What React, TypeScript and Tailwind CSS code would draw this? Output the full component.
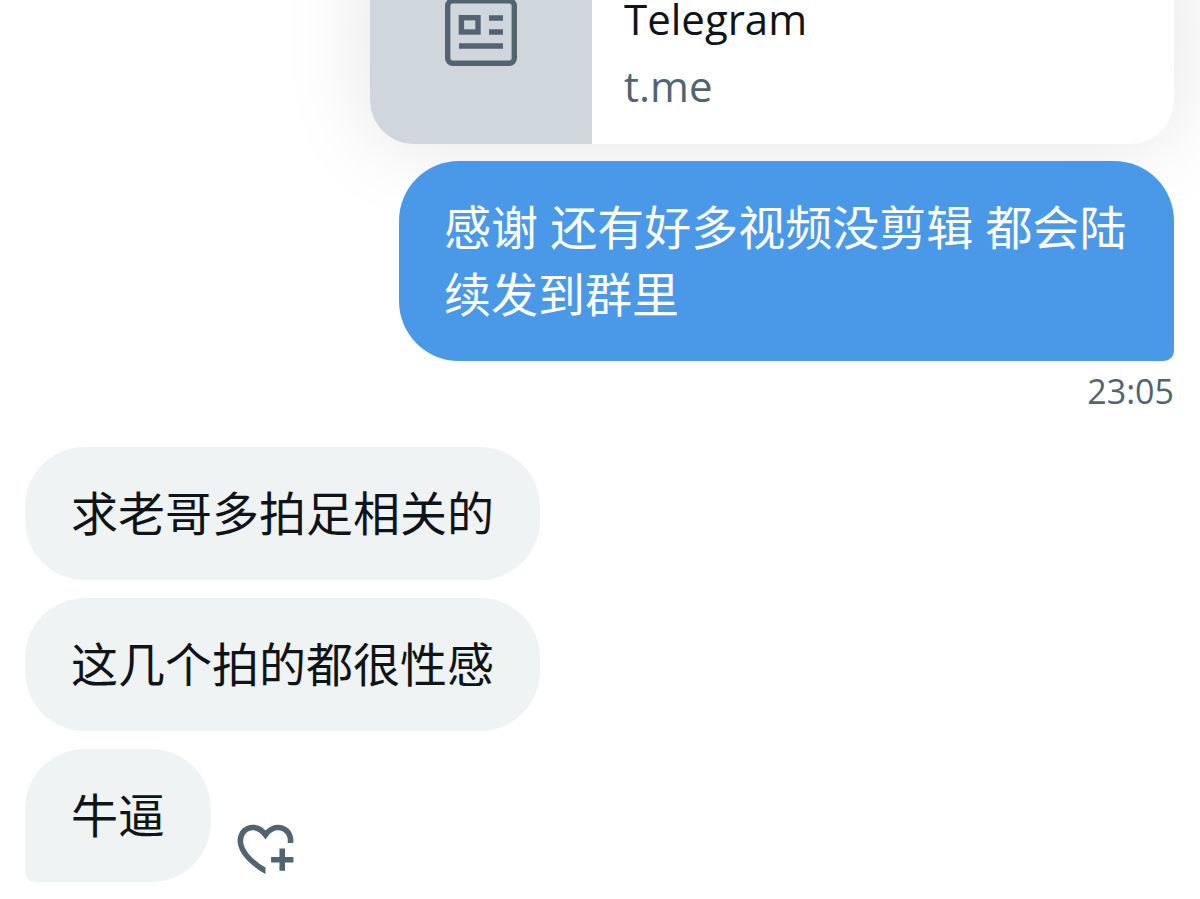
import React from 'react'

const receivedMessages = ['求老哥多拍足相关的', '这几个拍的都很性感']

const NewsIcon = () => (
    <svg width="72" height="68" viewBox="0 0 72 68" fill="none" stroke="#536471" aria-hidden="true">
        <rect x="2.7" y="2.7" width="66.6" height="62.6" rx="5" strokeWidth="5.4" />
        <rect x="16.4" y="19.7" width="16.6" height="14.3" strokeWidth="5.4" />
        <path d="M44 20h14M44 34h14M14 48h44" strokeWidth="5.4" />
    </svg>
)

const HeartPlusIcon = () => (
    <svg width="67" height="67" viewBox="0 0 24 24" fill="#536471" aria-hidden="true">
        <path d="M17 12v3h-2.998v2h3v3h2v-3h3v-2h-3.001v-3H17zm-5 6.839c-3.871-2.34-6.053-4.639-7.127-6.609-1.112-2.04-1.031-3.7-.479-4.82.561-1.13 1.667-1.84 2.91-1.91 1.222-.06 2.68.51 3.892 2.16l.806 1.09.805-1.09c1.211-1.65 2.668-2.22 3.89-2.16 1.242.07 2.347.78 2.908 1.91.334.677.49 1.554.321 2.59h2.011c.153-1.283-.039-2.469-.539-3.48-.887-1.79-2.647-2.91-4.601-3.01-1.65-.09-3.367.56-4.796 2.01-1.43-1.45-3.147-2.1-4.798-2.01-1.954.1-3.714 1.22-4.601 3.01-.896 1.81-.846 4.17.514 6.67 1.353 2.48 4.003 5.12 8.382 7.67l.502.299v-2.32z" />
    </svg>
)

const LinkCard = () => (
    <a
        href="https://t.me"
        className="-mt-[80px] flex h-[224px] w-full max-w-[804px] self-end overflow-hidden rounded-[44px] bg-white shadow-[0_0_90px_rgba(0,0,0,0.11)]"
    >
        <span className="flex w-[222px] shrink-0 items-center justify-center bg-[#cfd6dc]">
            <NewsIcon />
        </span>
        <span className="flex flex-1 flex-col justify-end px-8 pb-[25px] text-[42px] leading-[67px]">
            <span className="text-[#0f1419]">Telegram</span>
            <span className="text-[#536471]">t.me</span>
        </span>
    </a>
)

const App = () => {
    return (
        <main className="flex min-h-screen flex-col overflow-hidden bg-white pr-[26px] pb-4 pl-[25px] font-['Open_Sans','Noto_Sans_CJK_SC',sans-serif] text-[#0f1419]">
            <LinkCard />
            <p className="mt-[17px] max-w-[775px] self-end rounded-[60px] rounded-br-[10px] bg-[#4a99e9] py-[33px] pr-[46px] pl-[45px] text-[47px] leading-[67px] text-white">
                感谢 还有好多视频没剪辑 都会陆续发到群里
            </p>
            <time className="mt-2 self-end text-[34px] leading-[44px] text-[#536471]">23:05</time>
            <div className="mt-[34px] flex flex-col items-start gap-[18px] text-[47px] leading-[67px]">
                {receivedMessages.map((message) => (
                    <p key={message} className="rounded-[60px] bg-[#eff3f4] px-[46px] py-[33px]">
                        {message}
                    </p>
                ))}
                <div className="flex items-end gap-[21px]">
                    <p className="rounded-[60px] rounded-bl-[10px] bg-[#eff3f4] px-[46px] py-[33px]">牛逼</p>
                    <button type="button" aria-label="添加回应" className="cursor-pointer">
                        <HeartPlusIcon />
                    </button>
                </div>
            </div>
        </main>
    )
}

export default React.memo(App)
